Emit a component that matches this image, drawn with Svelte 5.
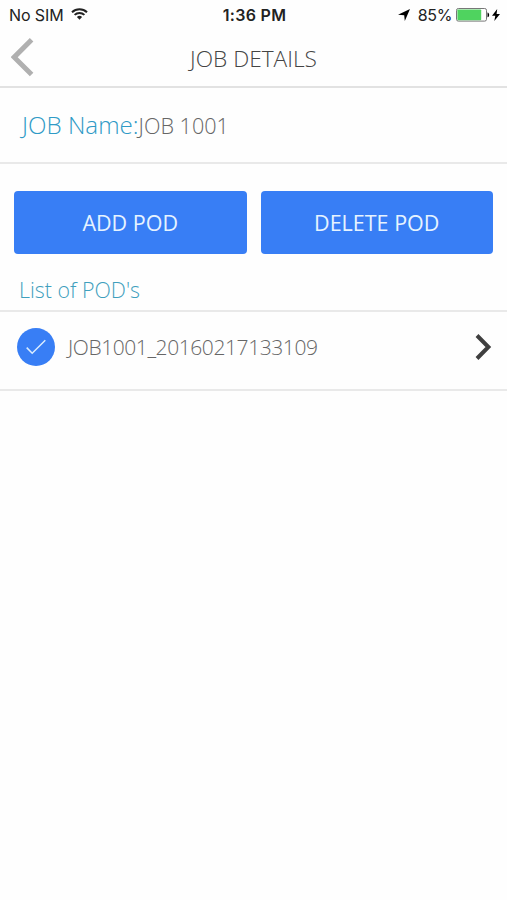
<script lang="ts">
  interface Pod {
    id: string;
    selected: boolean;
  }

  const jobName = 'JOB 1001';
  const actions = ['ADD POD', 'DELETE POD'];

  let pods = $state<Pod[]>([{ id: 'JOB1001_20160217133109', selected: true }]);
</script>

<div class="screen">
  <div class="status-bar">
    <div class="carrier">
      <span class="sim">No SIM</span>
      <svg class="wifi" viewBox="0 0 17 12" aria-hidden="true">
        <path d="M1 4.2a10.8 10.8 0 0 1 15 0" />
        <path d="M3.6 6.9a7 7 0 0 1 9.8 0" />
        <path class="dot" d="M8.5 11.7 5.9 9.1a3.7 3.7 0 0 1 5.2 0z" />
      </svg>
    </div>
    <span class="clock">1:36 PM</span>
    <div class="power">
      <svg class="location" viewBox="0 0 12 12" aria-hidden="true">
        <path d="M12 0 6.8 12 6.2 6.2 0 5.7z" />
      </svg>
      <span class="percent">85%</span>
      <svg class="battery" viewBox="0 0 34 14" aria-hidden="true">
        <rect class="shell" x="0.5" y="0.5" width="30" height="12.6" rx="1.8" />
        <rect class="charge" x="1.4" y="1.4" width="23.8" height="10.8" rx="0.8" />
        <path d="M31.5 4.5c2.2.6 2.2 4.2 0 4.8z" />
      </svg>
      <svg class="bolt" viewBox="0 0 8 12" aria-hidden="true">
        <path d="M5.2 0 0 6.8h3.3L2.3 12 8 4.9H4.6z" />
      </svg>
    </div>
  </div>

  <header class="nav-bar">
    <button class="back" aria-label="Back">
      <svg viewBox="0 0 24 40" aria-hidden="true">
        <path d="M20.6 1.8 3.2 19.2 20.6 36.6" />
      </svg>
    </button>
    <h1>JOB DETAILS</h1>
  </header>

  <div class="job">
    <span class="job-label">JOB Name:</span><span class="job-value">{jobName}</span>
  </div>

  <div class="actions">
    {#each actions as action}
      <button class="action">{action}</button>
    {/each}
  </div>

  <h2>List of POD's</h2>

  <ul class="pods">
    {#each pods as pod}
      <li class="pod">
        <button
          class="check"
          class:selected={pod.selected}
          aria-label="Select"
          onclick={() => (pod.selected = !pod.selected)}
        >
          {#if pod.selected}
            <svg viewBox="0 0 38 38" aria-hidden="true">
              <path d="M9.7 19.6 15.2 25.2 28.3 12.3" />
            </svg>
          {/if}
        </button>
        <span class="pod-id">{pod.id}</span>
        <svg class="chevron" viewBox="0 0 18 28" aria-hidden="true">
          <path d="M3 2.5 14.4 14 3 25.5" />
        </svg>
      </li>
    {/each}
  </ul>
</div>

<style>
  :global(body) {
    background: #fff;
  }

  .screen {
    height: 900px;
    overflow: hidden;
    background: #fefefe;
    font-family: 'Open Sans', sans-serif;
    font-weight: 300;
    color: #666;
  }

  button {
    padding: 0;
    border: 0;
    background: none;
    font: inherit;
  }

  svg {
    display: block;
    flex: none;
  }

  .status-bar {
    display: grid;
    grid-template-columns: 1fr auto 1fr;
    align-items: center;
    box-sizing: border-box;
    height: 29px;
    padding: 0 7px 0 9px;
    font-family: Inter, sans-serif;
    font-size: 16px;
    font-weight: 400;
    color: #222;
  }

  .carrier,
  .power {
    display: flex;
    align-items: center;
  }

  .sim {
    letter-spacing: -0.1px;
  }

  .wifi {
    width: 17px;
    height: 12px;
    margin: 0 0 2px 7px;
    fill: none;
    stroke: #222;
    stroke-width: 2;
  }

  .wifi .dot {
    fill: #222;
    stroke: none;
  }

  .clock {
    letter-spacing: 0.3px;
    font-weight: 600;
  }

  .power {
    justify-content: flex-end;
  }

  .location {
    width: 12px;
    height: 12px;
    margin-right: 8px;
  }

  .percent {
    margin-right: 4px;
    letter-spacing: -0.4px;
  }

  .battery {
    width: 34px;
    height: 14px;
  }

  .shell {
    fill: #fff;
    stroke: #777;
  }

  .charge {
    fill: #4fd35f;
  }

  .bolt {
    width: 8px;
    height: 12px;
    margin-left: 2px;
  }

  .nav-bar {
    display: grid;
    grid-template-columns: 60px 1fr 60px;
    align-items: center;
    height: 57px;
    border-bottom: 2px solid #e2e2e2;
  }

  .back {
    width: 24px;
    height: 40px;
    margin-left: 11px;
  }

  .back svg {
    width: 24px;
    height: 40px;
    fill: none;
    stroke: #b0b0b0;
    stroke-width: 5;
  }

  h1 {
    margin: 3px 0 0;
    text-align: center;
    font-size: 22.7px;
    font-weight: 300;
    line-height: 32px;
    color: #444;
  }

  .job {
    display: flex;
    align-items: baseline;
    box-sizing: border-box;
    height: 76px;
    padding: 19px 22px 0;
    border-bottom: 2px solid #e9e9e9;
    line-height: 36px;
    white-space: nowrap;
  }

  .job-label {
    font-size: 24.2px;
    color: #2f9ac6;
  }

  .job-value {
    font-size: 21.6px;
  }

  .actions {
    display: grid;
    grid-template-columns: 1fr 1fr;
    gap: 14px;
    padding: 27px 14px 0;
  }

  .action {
    height: 63px;
    border-radius: 4px;
    background: #387ef5;
    color: #e6f3ff;
    font-size: 21.5px;
    font-weight: 400;
  }

  h2 {
    box-sizing: border-box;
    height: 56px;
    margin: 0;
    padding: 20px 19px 0;
    font-size: 21.4px;
    font-weight: 300;
    line-height: 32px;
    color: #3f9fbd;
  }

  .pods {
    margin: 0;
    padding: 0;
    border-top: 2px solid #e9e9e9;
    list-style: none;
  }

  .pod {
    display: flex;
    align-items: center;
    box-sizing: border-box;
    height: 79px;
    padding: 0 15px 7px 17px;
    border-bottom: 2px solid #e9e9e9;
  }

  .check {
    box-sizing: border-box;
    width: 38px;
    height: 38px;
    border: 1px solid #387ef5;
    border-radius: 50%;
  }

  .check.selected {
    border: 0;
    background: #387ef5;
  }

  .check svg {
    width: 38px;
    height: 38px;
    fill: none;
    stroke: #d9ecff;
    stroke-width: 1.5;
  }

  .pod-id {
    flex: 1;
    margin-left: 13px;
    font-size: 21px;
    letter-spacing: -0.42px;
  }

  .chevron {
    width: 18px;
    height: 28px;
    fill: none;
    stroke: #3f3f3f;
    stroke-width: 4;
  }
</style>
